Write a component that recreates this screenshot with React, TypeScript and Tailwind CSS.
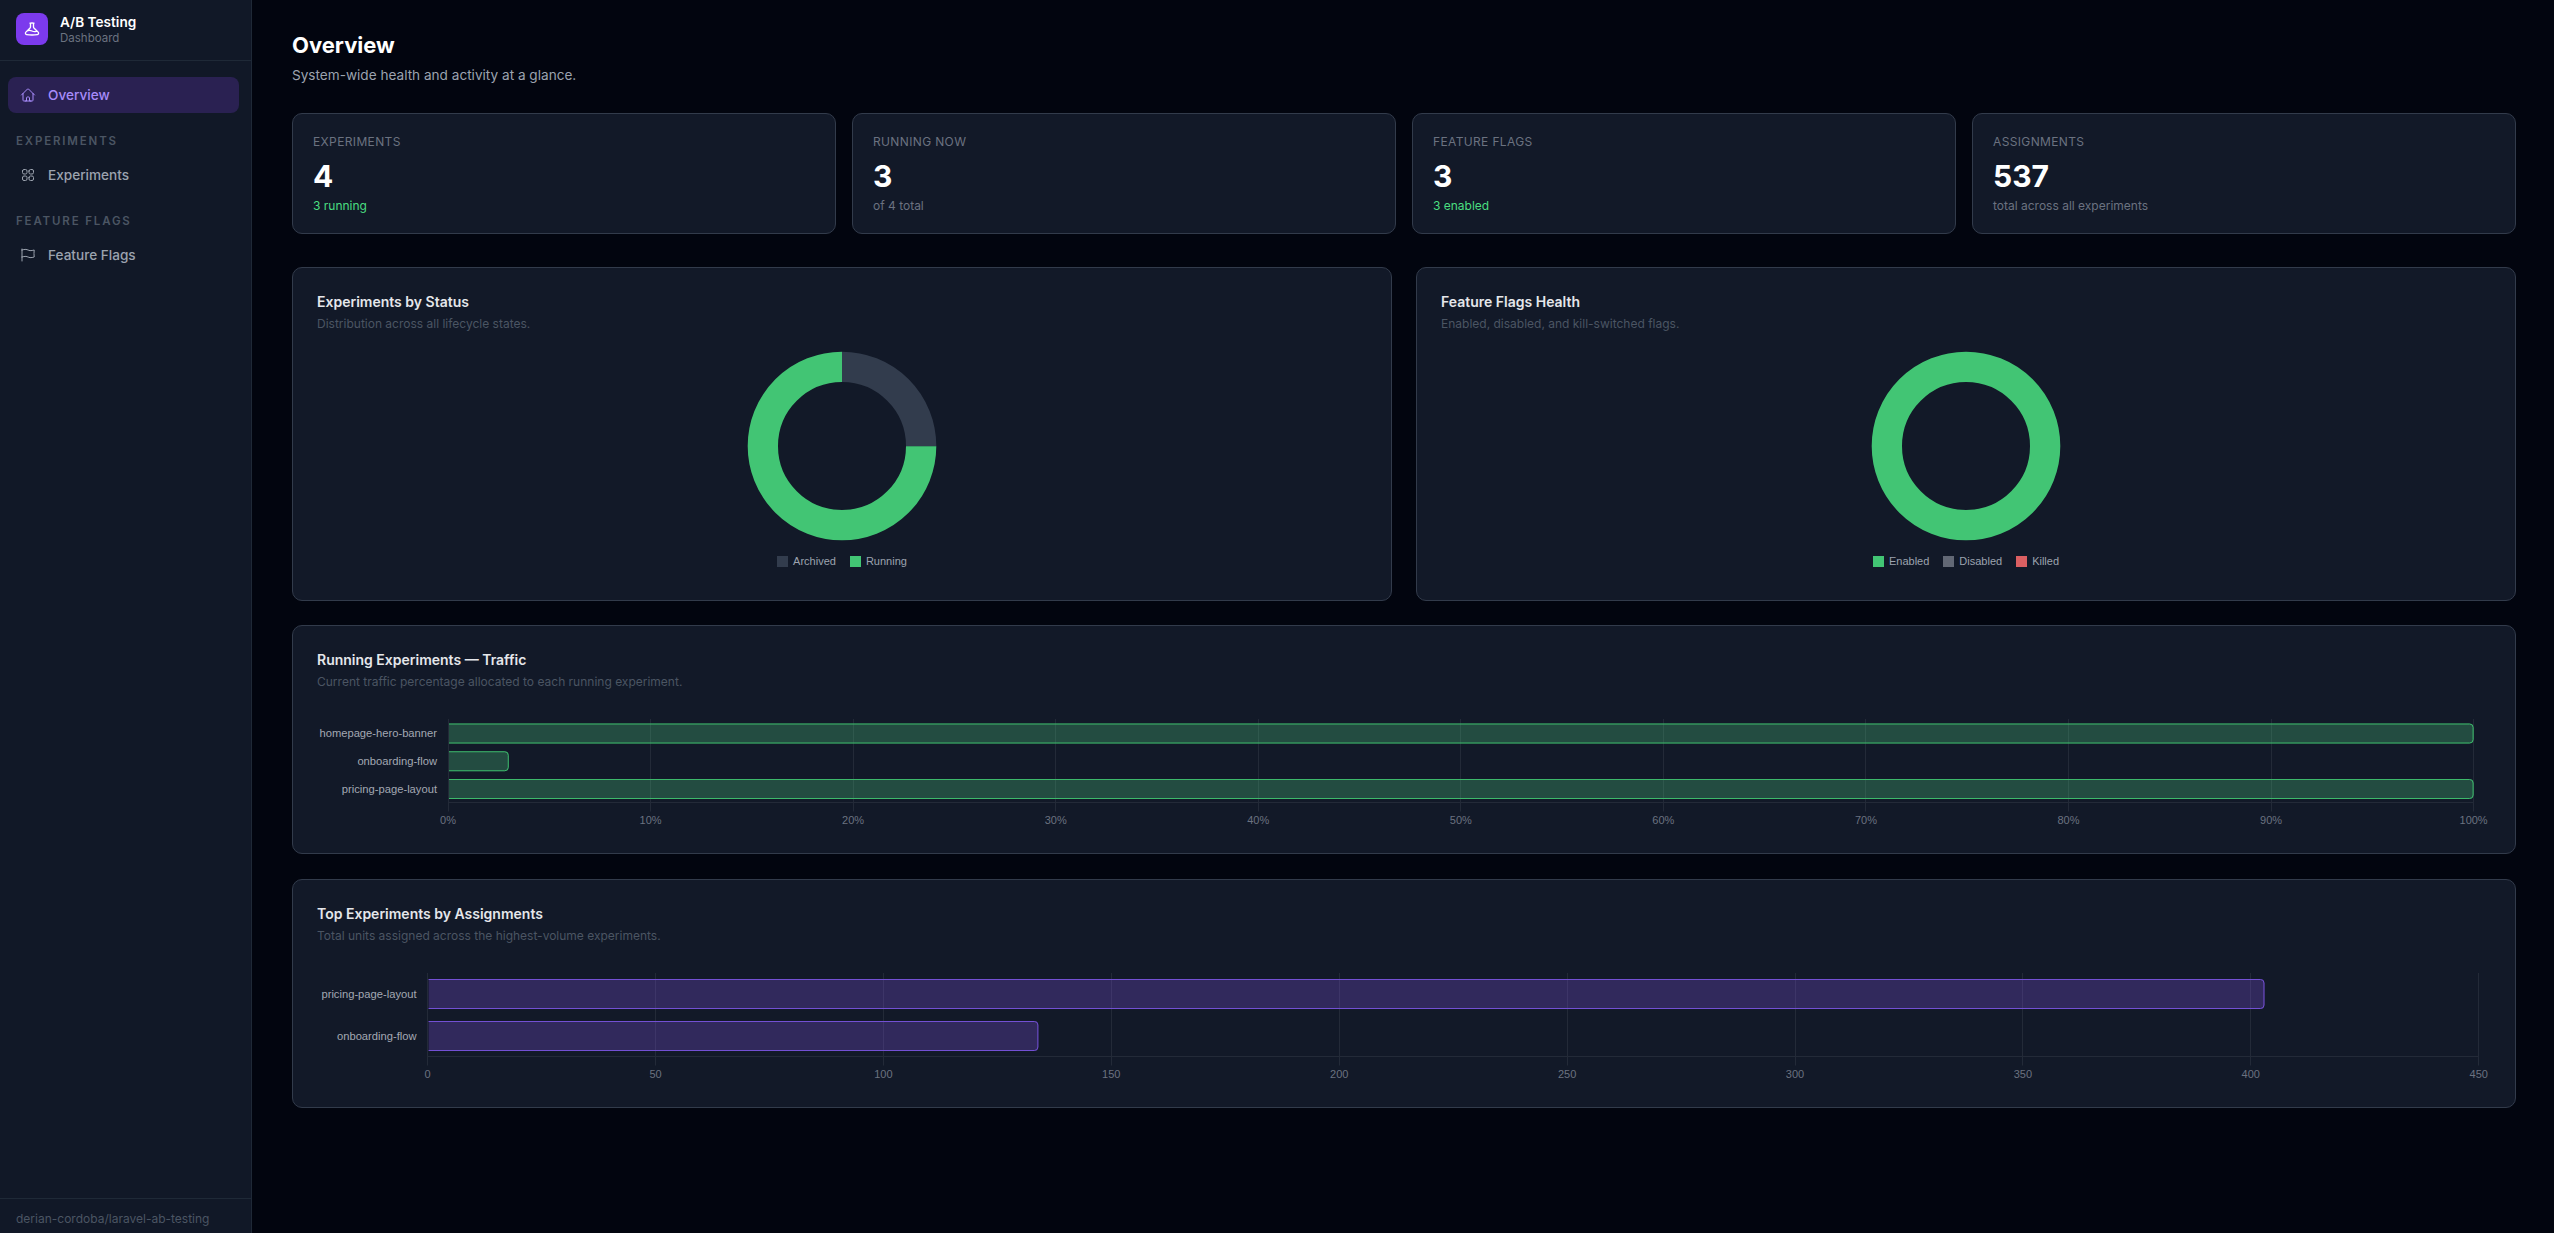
import React from 'react';

const HOME = 'm2.25 12 8.954-8.955c.44-.439 1.152-.439 1.591 0L21.75 12M4.5 9.75v10.125c0 .621.504 1.125 1.125 1.125H9.75v-4.875c0-.621.504-1.125 1.125-1.125h2.25c.621 0 1.125.504 1.125 1.125V21h4.125c.621 0 1.125-.504 1.125-1.125V9.75M8.25 21h8.25';
const SQUARES = 'M3.75 6A2.25 2.25 0 0 1 6 3.75h2.25A2.25 2.25 0 0 1 10.5 6v2.25a2.25 2.25 0 0 1-2.25 2.25H6a2.25 2.25 0 0 1-2.25-2.25V6ZM3.75 15.75A2.25 2.25 0 0 1 6 13.5h2.25a2.25 2.25 0 0 1 2.25 2.25V18a2.25 2.25 0 0 1-2.25 2.25H6A2.25 2.25 0 0 1 3.75 18v-2.25ZM13.5 6a2.25 2.25 0 0 1 2.25-2.25H18A2.25 2.25 0 0 1 20.25 6v2.25A2.25 2.25 0 0 1 18 10.5h-2.25a2.25 2.25 0 0 1-2.25-2.25V6ZM13.5 15.75a2.25 2.25 0 0 1 2.25-2.25H18a2.25 2.25 0 0 1 2.25 2.25V18A2.25 2.25 0 0 1 18 20.25h-2.25A2.25 2.25 0 0 1 13.5 18v-2.25Z';
const FLAG = 'M3 3v1.5M3 21v-6m0 0 2.77-.693a9 9 0 0 1 6.208.682l.108.054a9 9 0 0 0 6.086.71l3.114-.732a48.524 48.524 0 0 1-.005-10.499l-3.11.732a9 9 0 0 1-6.085-.711l-.108-.054a9 9 0 0 0-6.208-.682L3 4.5M3 15V4.5';
const BEAKER = 'M9.75 3.104v5.714a2.25 2.25 0 0 1-.659 1.591L5 14.5M9.75 3.104c-.251.023-.501.05-.75.082m.75-.082a24.301 24.301 0 0 1 4.5 0m0 0v5.714c0 .597.237 1.17.659 1.591L19.8 15.3M14.25 3.104c.251.023.501.05.75.082M19.8 15.3l-1.57.393A9.065 9.065 0 0 1 12 15a9.065 9.065 0 0 0-6.23-.693L5 14.5m14.8.8 1.402 1.402c1.232 1.232.65 3.318-1.067 3.611A48.309 48.309 0 0 1 12 21c-2.773 0-5.491-.235-8.135-.687-1.718-.293-2.3-2.379-1.067-3.61L5 14.5';

const Icon: React.FC<{ d: string; className: string; sw?: number }> = ({ d, className, sw = 1.5 }) => (
  <svg xmlns="http://www.w3.org/2000/svg" viewBox="0 0 24 24" fill="none" stroke="currentColor" strokeWidth={sw} strokeLinecap="round" strokeLinejoin="round" className={className}>
    <path d={d} />
  </svg>
);

const stats = [
  { label: 'Experiments', value: '4', sub: '3 running', green: true },
  { label: 'Running now', value: '3', sub: 'of 4 total', green: false },
  { label: 'Feature flags', value: '3', sub: '3 enabled', green: true },
  { label: 'Assignments', value: '537', sub: 'total across all experiments', green: false },
];

const NavItem: React.FC<{ d: string; label: string; active?: boolean }> = ({ d, label, active }) => (
  <div className={`flex items-center gap-3 h-9 px-3 rounded-lg text-[13.6px] font-medium ${active ? 'bg-[#2a2152] text-[#a78bfa]' : 'text-[#9ca3af]'}`}>
    <Icon d={d} className="w-4 h-4 shrink-0" />
    {label}
  </div>
);

const SectionLabel: React.FC<{ children: React.ReactNode }> = ({ children }) => (
  <div className="px-2 pb-2 text-[11.5px] leading-[16px] font-semibold uppercase tracking-[0.16em] text-[#4b5563]">{children}</div>
);

const Panel: React.FC<{ title: string; sub: string; children: React.ReactNode }> = ({ title, sub, children }) => (
  <section className="rounded-[10px] border border-[#323b4b] bg-[#121928] px-6 pt-6 pb-6">
    <h2 className="text-sm font-semibold text-[#e5e7eb]">{title}</h2>
    <p className="mt-1 text-xs text-[#4b5563]">{sub}</p>
    {children}
  </section>
);

const Donut: React.FC<{ slices: { color: string; share: number }[] }> = ({ slices }) => {
  const r = 79.15;
  const c = 2 * Math.PI * r;
  let offset = 0;
  return (
    <svg width="190" height="190" viewBox="0 0 190 190" className="block">
      <g transform="rotate(-90 95 95)">
        {slices.map((s) => {
          const el = <circle key={s.color} cx="95" cy="95" r={r} fill="none" stroke={s.color} strokeWidth="30.3" strokeDasharray={`${s.share * c} ${c}`} strokeDashoffset={-offset * c} />;
          offset += s.share;
          return el;
        })}
      </g>
    </svg>
  );
};

const Legend: React.FC<{ items: { color: string; label: string }[] }> = ({ items }) => (
  <div className="mt-[14px] flex items-center gap-[14px] font-['Liberation_Sans',Arial,sans-serif] text-[11px] leading-[12px] text-[#9ca3af]">
    {items.map((i) => (
      <span key={i.label} className="flex items-center gap-[5px]">
        <span className="w-[11px] h-[11px]" style={{ backgroundColor: i.color }} />
        {i.label}
      </span>
    ))}
  </div>
);

const DonutPanel: React.FC<{ title: string; sub: string; slices: { color: string; share: number }[]; legend: { color: string; label: string }[] }> = ({ title, sub, slices, legend }) => (
  <Panel title={title} sub={sub}>
    <div className="h-[244px] pt-[19px] flex flex-col items-center">
      <Donut slices={slices} />
      <Legend items={legend} />
    </div>
  </Panel>
);

interface Bar {
  label: string;
  value: number;
  y: number;
}

// coordinates are relative to the svg, which is 2174 wide and 123 high
const BarChart: React.FC<{ x0: number; step: number; ticks: string[]; max: number; bars: Bar[]; barH: number; top: number; axis: number; fill: string; stroke: string }> = ({ x0, step, ticks, max, bars, barH, top, axis, fill, stroke }) => {
  const unit = (step * (ticks.length - 1)) / max;
  return (
    <svg width="2174" height="123" viewBox="0 0 2174 123" className="mt-4 block font-['Liberation_Sans',Arial,sans-serif] text-[11px]">
      {ticks.map((t, i) => {
        const x = Math.floor(x0 + i * step) + 0.5;
        return (
          <g key={t}>
            <line x1={x} x2={x} y1={top} y2={axis + 9} stroke="#232a38" />
            <text x={x0 + i * step} y={axis + 21} textAnchor="middle" fill="#6b7280">{t}</text>
          </g>
        );
      })}
      <line x1={x0} x2={x0 + step * (ticks.length - 1)} y1={axis} y2={axis} stroke="#232a38" />
      {bars.map((b) => {
        const x = x0 + 1;
        const w = b.value * unit;
        const r = x0 + w - 0.5;
        const t = b.y + 0.5;
        const bt = b.y + barH - 0.5;
        return (
          <g key={b.label}>
            <text x={x0 - 11} y={b.y + barH / 2 + 3.5} textAnchor="end" fill="#a3a8b3" className="text-[11.2px]">{b.label}</text>
            <path d={`M${x} ${b.y}H${x0 + w - 4}a4 4 0 0 1 4 4V${b.y + barH - 4}a4 4 0 0 1 -4 4H${x}Z`} fill={fill} />
            <path d={`M${x} ${t}H${r - 3.5}a3.5 3.5 0 0 1 3.5 3.5V${bt - 3.5}a3.5 3.5 0 0 1 -3.5 3.5H${x}`} fill="none" stroke={stroke} />
          </g>
        );
      })}
    </svg>
  );
};

const App: React.FC = () => {
  return (
    <div className="flex min-h-screen bg-[#02050f] font-['Inter',sans-serif] antialiased">
      <aside className="w-[252px] shrink-0 flex flex-col bg-[#111827] border-r border-[#1f2937]">
        <div className="h-[61px] shrink-0 flex items-center gap-3 px-4 pb-[2px] border-b border-[#1f2937]">
          <div className="w-8 h-8 rounded-lg bg-[#7c3aed] flex items-center justify-center text-white">
            <Icon d={BEAKER} sw={2} className="w-4 h-4" />
          </div>
          <div>
            <div className="text-[13.6px] font-semibold leading-[18px] text-white">A/B Testing</div>
            <div className="text-[11.5px] leading-[15px] text-[#6b7280]">Dashboard</div>
          </div>
        </div>
        <nav className="flex-1 pl-2 pr-3 pt-4">
          <NavItem d={HOME} label="Overview" active />
          <div className="mt-5">
            <SectionLabel>Experiments</SectionLabel>
            <NavItem d={SQUARES} label="Experiments" />
          </div>
          <div className="mt-5">
            <SectionLabel>Feature Flags</SectionLabel>
            <NavItem d={FLAG} label="Feature Flags" />
          </div>
        </nav>
        <div className="h-[35px] shrink-0 border-t border-[#1f2937] px-4 pt-[6px] flex items-center text-xs text-[#4b5563]">derian-cordoba/laravel-ab-testing</div>
      </aside>

      <main className="flex-1 min-w-0 pl-10 pr-[38px] pt-[29px]">
        <h1 className="text-[22px] font-bold leading-8 text-white">Overview</h1>
        <p className="mt-1 text-[13.6px] leading-5 text-[#9ca3af]">System-wide health and activity at a glance.</p>

        <div className="mt-7 grid grid-cols-4 gap-4">
          {stats.map((s) => (
            <div key={s.label} className="rounded-[10px] border border-[#323b4b] bg-[#121928] px-5 pt-5 pb-[19px]">
              <div className="text-xs uppercase tracking-[0.03em] text-[#6b7280]">{s.label}</div>
              <div className="mt-2 text-3xl font-bold text-white">{s.value}</div>
              <div className={`mt-1 text-xs ${s.green ? 'text-[#4ade80]' : 'text-[#6b7280]'}`}>{s.sub}</div>
            </div>
          ))}
        </div>

        <div className="mt-[33px] grid grid-cols-2 gap-6">
          <DonutPanel
            title="Experiments by Status"
            sub="Distribution across all lifecycle states."
            slices={[{ color: '#323c4d', share: 0.25 }, { color: '#42c574', share: 0.75 }]}
            legend={[{ color: '#323c4d', label: 'Archived' }, { color: '#42c574', label: 'Running' }]}
          />
          <DonutPanel
            title="Feature Flags Health"
            sub="Enabled, disabled, and kill-switched flags."
            slices={[{ color: '#42c574', share: 1 }]}
            legend={[{ color: '#42c574', label: 'Enabled' }, { color: '#626875', label: 'Disabled' }, { color: '#db5f62', label: 'Killed' }]}
          />
        </div>

        <div className="mt-6">
          <Panel title="Running Experiments — Traffic" sub="Current traffic percentage allocated to each running experiment.">
            <BarChart
              x0={131} step={202.56} max={100} top={13} axis={96.5} barH={20}
              ticks={['0%', '10%', '20%', '30%', '40%', '50%', '60%', '70%', '80%', '90%', '100%']}
              fill="rgba(75,197,125,0.3)" stroke="#3db96b"
              bars={[
                { label: 'homepage-hero-banner', value: 100, y: 17.5 },
                { label: 'onboarding-flow', value: 3, y: 45.25 },
                { label: 'pricing-page-layout', value: 100, y: 73 },
              ]}
            />
          </Panel>
        </div>

        <div className="mt-[25px]">
          <Panel title="Top Experiments by Assignments" sub="Total units assigned across the highest-volume experiments.">
            <BarChart
              x0={110.6} step={227.9} max={450} top={13} axis={96.5} barH={30}
              ticks={['0', '50', '100', '150', '200', '250', '300', '350', '400', '450']}
              fill="rgba(124,79,216,0.3)" stroke="#7350d4"
              bars={[
                { label: 'pricing-page-layout', value: 403, y: 19 },
                { label: 'onboarding-flow', value: 134, y: 61 },
              ]}
            />
          </Panel>
        </div>
      </main>
    </div>
  );
};

export default App;
